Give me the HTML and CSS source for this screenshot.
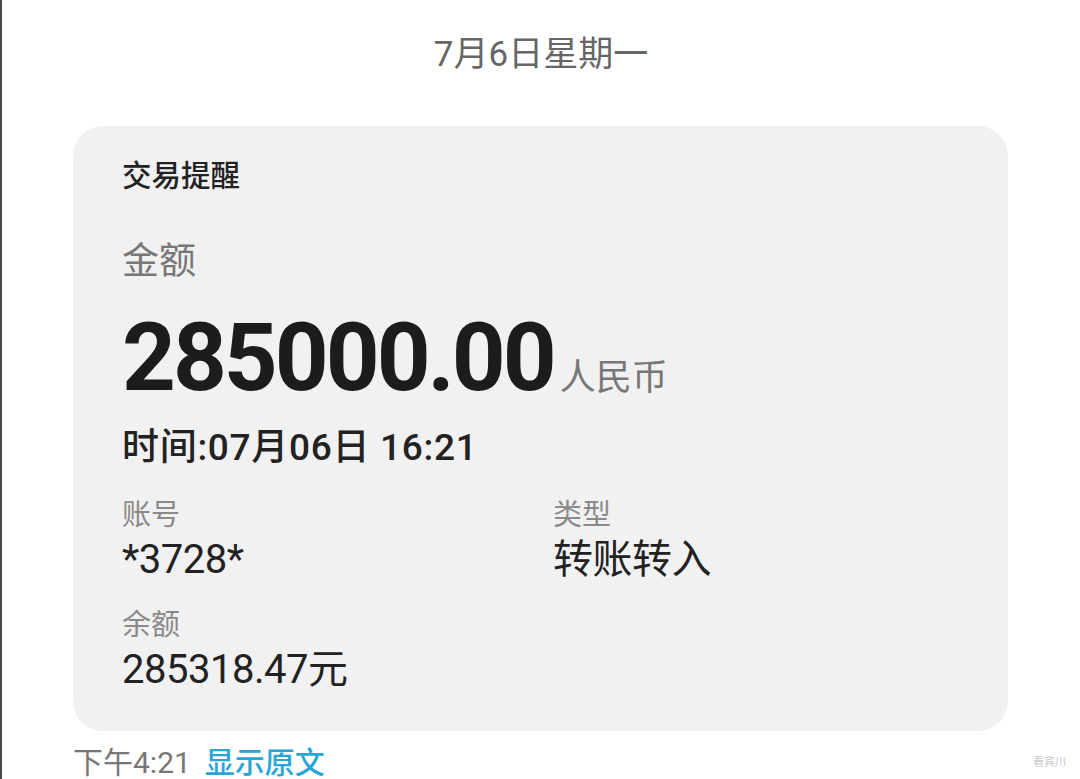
FILE: index.html
```html
<!DOCTYPE html>
<html lang="zh-CN">

<head>
  <meta charset="UTF-8">
  <meta name="viewport" content="width=device-width, initial-scale=1.0">
  <title>交易提醒</title>
  <link rel="stylesheet" href="styles.css">
</head>

<body>
  <div class="screen">
    <div class="date">7月6日星期一</div>

    <!-- Message card -->
    <div class="card">
      <div class="card-title">交易提醒</div>
      <div class="big-label">金额</div>
      <div class="amount-row">
        <span class="amount">285000.00</span>
        <span class="currency">人民币</span>
      </div>
      <div class="time">时间:07月06日 16:21</div>

      <div class="fields">
        <div class="field">
          <div class="label">账号</div>
          <div class="value">*3728*</div>
        </div>
        <div class="field">
          <div class="label">类型</div>
          <div class="value">转账转入</div>
        </div>
        <div class="field">
          <div class="label">余额</div>
          <div class="value">285318.47元</div>
        </div>
      </div>
    </div>

    <div class="footer">
      <span class="sent">下午4:21</span>
      <span class="original">显示原文</span>
    </div>

    <div class="watermark">看宾川</div>
  </div>
</body>

</html>
```

FILE: styles.css
```css
body {
  margin: 0;
  padding: 0;
  background: #ffffff;
  font-family: Roboto, "Noto Sans CJK SC", sans-serif;
}

.screen {
  position: relative;
  height: 779px;
  border-left: 2px solid #4a4a4a;
  box-sizing: border-box;
  overflow: hidden;
}

.date {
  text-align: center;
  padding-top: 32px;
  height: 126px;
  box-sizing: border-box;
  font-size: 35px;
  line-height: 46px;
  color: #666666;
}

.card {
  margin-left: 71px;
  width: 935px;
  height: 605px;
  box-sizing: border-box;
  background: #f1f1f1;
  border-radius: 30px;
  padding: 30px 0 0 49px;
}

.card-title {
  font-size: 29.5px;
  line-height: 40px;
  font-weight: 500;
  color: #222222;
}

.big-label {
  margin-top: 42px;
  font-size: 37px;
  line-height: 48px;
  color: #777777;
}

.amount-row {
  display: flex;
  align-items: baseline;
  margin-top: 22px;
  height: 100px;
}

.amount {
  font-size: 94px;
  line-height: 100px;
  font-weight: 700;
  color: #1c1c1c;
  letter-spacing: -3px;
}

.currency {
  margin-left: 6px;
  font-size: 36px;
  color: #777777;
}

.time {
  margin-top: 16px;
  font-size: 37px;
  line-height: 48px;
  font-weight: 500;
  color: #222222;
  letter-spacing: 0.7px;
}

.fields {
  display: grid;
  grid-template-columns: 431px 1fr;
  row-gap: 20px;
  margin-top: 23px;
}

.label {
  font-size: 29px;
  line-height: 40px;
  color: #8a8a8a;
}

.value {
  font-size: 40px;
  line-height: 50px;
  color: #222222;
  letter-spacing: -0.5px;
}

.footer {
  margin-left: 71px;
  padding-top: 12px;
  display: flex;
  gap: 14px;
  font-size: 30px;
  line-height: 40px;
}

.sent {
  color: #777777;
}

.original {
  color: #2aa6d6;
  font-weight: 500;
}

.watermark {
  position: absolute;
  right: 14px;
  bottom: 10px;
  font-size: 11px;
  color: #c8c8c8;
}
```
